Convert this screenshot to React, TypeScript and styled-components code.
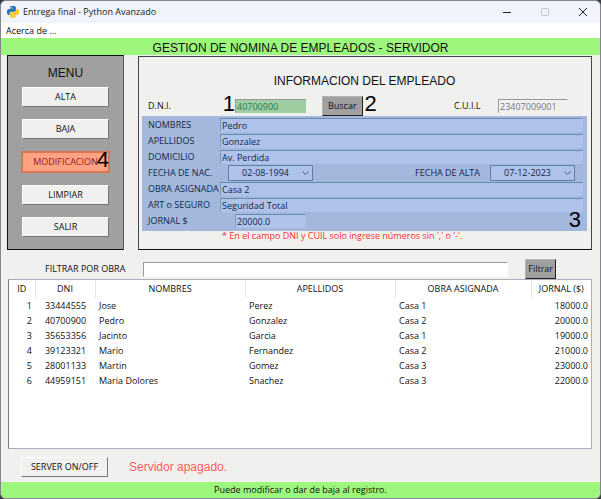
import React, { useState } from "react";
import styled, { createGlobalStyle } from "styled-components";

const GlobalStyle = createGlobalStyle`
  * { box-sizing: border-box; }
  body { margin: 0; background: #3a3c48; }
  body, button, input, select { font-family: "Open Sans", "Noto Sans", sans-serif; font-size: 9px; line-height: 12px; color: #111; }
  h1, h2, p { margin: 0; font-weight: 400; }
`;

const Window = styled.div`
  min-height: 100vh;
  display: flex;
  flex-direction: column;
  background: #f0f0ee;
  border: 1px solid #85858b;
  border-radius: 6px;
  overflow: hidden;
`;

const TitleBar = styled.header`
  display: flex;
  align-items: center;
  gap: 4px;
  height: 22px;
  padding-left: 6px;
  background: #f0f3f9;
`;

const WindowTitle = styled.span`
  flex: 1;
  color: #222;
`;

const CaptionButton = styled.button`
  display: flex;
  align-items: center;
  justify-content: center;
  width: 34px;
  height: 22px;
  padding: 0;
  border: 0;
  background: none;
  color: #222;
  &:disabled { color: #c4c6cb; }
`;

const MenuBar = styled.nav`
  display: flex;
  align-items: center;
  height: 15px;
  padding-left: 5px;
  background: #fff;
`;

const MenuLink = styled.a`
  color: #111;
  font-weight: 500;
  text-decoration: none;
`;

const Banner = styled.h1`
  height: 17px;
  background: #9cf77c;
  font: 12px/20px "Liberation Sans", Arial, sans-serif;
  text-align: center;
`;

const Body = styled.main`
  flex: 1;
  display: flex;
  flex-direction: column;
  padding: 0 8px 0 6px;
`;

const TopArea = styled.div`
  display: grid;
  grid-template-columns: 117px 1fr;
  gap: 14px;
`;

const MenuPanel = styled.aside`
  display: flex;
  flex-direction: column;
  align-items: center;
  gap: 12px;
  padding-top: 9px;
  background: #a0a0a0;
  border: 1px solid #111;
  border-right-color: #555;
`;

const PanelTitle = styled.h2`
  font: 12px/16px "Liberation Sans", Arial, sans-serif;
  text-align: center;
`;

const MenuHeading = styled(PanelTitle)`
  margin-bottom: -6px;
`;

const PushButton = styled.button<{ $marked?: boolean }>`
  width: ${(p) => (p.$marked ? "89px" : "87px")};
  height: ${(p) => (p.$marked ? "22px" : "20px")};
  padding: 0;
  background: ${(p) => (p.$marked ? "#ffa183" : "#f0f0ee")};
  border: ${(p) => (p.$marked ? "2px" : "1px")} solid;
  border-color: ${(p) => (p.$marked ? "#dc7558" : "#fff #777 #777 #fff")};
  color: ${(p) => (p.$marked ? "#8f1c1c" : "#111")};
`;

const MarkAnchor = styled.div`
  position: relative;
  display: flex;
`;

const Mark = styled.span<{ $right: number; $bottom: number }>`
  position: absolute;
  right: ${(p) => p.$right}px;
  bottom: ${(p) => p.$bottom}px;
  font: 22px/22px "Liberation Sans", Arial, sans-serif;
  color: #000;
`;

const InfoPanel = styled.section`
  display: flex;
  flex-direction: column;
  margin-top: 1px;
  padding: 16px 4px 0 3px;
  border: 1px solid #44424c;
  border-bottom: 1px solid #111;
`;

const LookupRow = styled.div`
  display: flex;
  align-items: center;
  height: 20px;
  margin-top: 7px;
  padding: 0 19px 0 6px;
`;

const LookupLabel = styled.label<{ $width: number }>`
  width: ${(p) => p.$width}px;
`;

const Entry = styled.input<{ $width?: number; $tone?: string; $ink?: string }>`
  width: ${(p) => (p.$width ? p.$width + "px" : "100%")};
  min-width: 0;
  height: 14px;
  padding: 0 1px;
  border: 1px solid transparent;
  border-top-color: #999;
  border-left-color: #999;
  background: ${(p) => p.$tone ?? "#fff"};
  color: ${(p) => p.$ink ?? "#222"};
  outline: 0;
`;

const BlueEntry = styled(Entry)`
  background: #aec2ea;
  border-color: #6a8bae transparent transparent #7d9abf;
  color: #14284a;
`;

const GreyButton = styled.button`
  height: 20px;
  padding: 0 5px;
  background: #a0a0a0;
  border: 1px solid #b5b5b5;
  border-right-color: #222;
  border-bottom-color: #222;
`;

const SearchSlot = styled(MarkAnchor)`
  margin-left: 16px;
`;

const Spacer = styled.div`
  flex: 1;
`;

const Fields = styled.div`
  position: relative;
  padding: 1px 4px 2px 6px;
  background: #a3b8dc;
  color: #14284a;
`;

const FieldRow = styled.div`
  display: grid;
  grid-template-columns: 72px 1fr;
  align-items: center;
  height: 16px;
`;

const DateGroup = styled.div`
  display: flex;
  align-items: center;
  padding: 0 8px;
`;

const DateLabel = styled.label`
  margin: 0 10px 0 auto;
`;

const DateBox = styled.div`
  position: relative;
  display: flex;
`;

const DateSelect = styled.select`
  appearance: none;
  width: 85px;
  height: 16px;
  padding: 0 0 0 13px;
  border: 1px solid #5e7ea4;
  border-radius: 1px;
  background: #aec2ea;
  color: #14284a;
`;

const Arrow = styled.svg`
  position: absolute;
  right: 4px;
  top: 5px;
  pointer-events: none;
`;

const SalaryCell = styled.div`
  display: flex;
  padding-left: 15px;
`;

const Hint = styled.p`
  height: 18px;
  padding-left: 80px;
  line-height: 10px;
  color: #f8302c;
`;

const FilterRow = styled.form`
  display: flex;
  align-items: center;
  height: 20px;
  margin-top: 9px;
  padding: 0 36px 0 38px;
`;

const FilterLabel = styled.label`
  width: 98px;
`;

const FilterEntry = styled(Entry)`
  flex: 1;
  height: 15px;
  margin-right: 17px;
`;

const FilterButton = styled(GreyButton)`
  padding: 0 2px;
`;

const TableFrame = styled.div`
  flex: 1;
  margin-left: 1px;
  background: #fff;
  border: 1px solid #aeb0b8;
  border-left-color: #777b88;
`;

const Table = styled.table`
  width: 100%;
  table-layout: fixed;
  border-collapse: collapse;
`;

const Col = styled.col<{ $width: string }>`
  width: ${(p) => p.$width};
`;

const HeadCell = styled.th`
  height: 18px;
  padding: 0;
  border-right: 1px solid #e4e4e4;
  font-weight: 400;
  &:last-child { border-right: 0; }
`;

const Cell = styled.td<{ $align?: string }>`
  height: 15px;
  padding: 0 3px 0 4px;
  text-align: ${(p) => p.$align ?? "left"};
`;

const ServerRow = styled.div`
  display: flex;
  align-items: center;
  gap: 21px;
  height: 33px;
  padding: 2px 0 0 14px;
`;

const ServerState = styled.p`
  font: 12px/16px "Liberation Sans", Arial, sans-serif;
  color: #ff5c5c;
`;

const StatusBar = styled.footer`
  height: 16px;
  background: #9cf77c;
  font-weight: 500;
  line-height: 16px;
  text-align: center;
`;

const SNAKE =
  "M14.25.18l.9.2.73.26.59.3.45.32.34.34.25.34.16.33.1.3.04.26.02.2-.01.13V8.5l-.05.63-.13.55-.21.46-.26.38-.3.31-.33.25-.35.19-.35.14-.33.1-.3.07-.26.04-.21.02H8.77l-.69.05-.59.14-.5.22-.41.27-.33.32-.27.35-.2.36-.15.37-.1.35-.07.32-.04.27-.02.21v3.06H3.17l-.21-.03-.28-.07-.32-.12-.35-.18-.36-.26-.36-.36-.35-.46-.32-.59-.28-.73-.21-.88-.14-1.05-.05-1.23.06-1.22.16-1.04.24-.87.32-.71.36-.57.4-.44.42-.33.42-.24.4-.16.36-.1.32-.05.24-.01h.16l.06.01h8.16v-.83H6.18l-.01-2.75-.02-.37.05-.34.11-.31.17-.28.25-.26.31-.23.38-.2.44-.18.51-.15.58-.12.64-.1.71-.06.77-.04.84-.02 1.27.05zm-6.3 1.98l-.23.33-.08.41.08.41.23.34.33.22.41.09.41-.09.33-.22.23-.34.08-.41-.08-.41-.23-.33-.33-.22-.41-.09-.41.09z";

const PythonLogo = () => (
  <svg width="12" height="12" viewBox="0 0 24 24" aria-hidden="true">
    <path d={SNAKE} fill="#2a74b8" />
    <path d={SNAKE} fill="#fbc928" transform="rotate(180 12 12)" />
  </svg>
);

const DateField = ({ id, value }: { id: string; value: string }) => (
  <DateBox>
    <DateSelect id={id} defaultValue={value}>
      <option>{value}</option>
    </DateSelect>
    <Arrow width="7" height="6" viewBox="0 0 7 6">
      <path d="M.5 1.5l3 3 3-3" fill="none" stroke="#3c5a86" />
    </Arrow>
  </DateBox>
);

const TextRow = ({ id, label, value }: { id: string; label: string; value: string }) => (
  <FieldRow>
    <label htmlFor={id}>{label}</label>
    <BlueEntry id={id} defaultValue={value} />
  </FieldRow>
);

const COLUMNS = [
  { title: "ID", width: "26px", align: "right" },
  { title: "DNI", width: "60px", align: "center" },
  { title: "NOMBRES", width: "150px" },
  { title: "APELLIDOS", width: "auto" },
  { title: "OBRA ASIGNADA", width: "136px" },
  { title: "JORNAL ($)", width: "60px", align: "right" },
];

const EMPLOYEES = [
  ["1", "33444555", "Jose", "Perez", "Casa 1", "18000.0"],
  ["2", "40700900", "Pedro", "Gonzalez", "Casa 2", "20000.0"],
  ["3", "35653356", "Jacinto", "Garcia", "Casa 1", "19000.0"],
  ["4", "39123321", "Mario", "Fernandez", "Casa 2", "21000.0"],
  ["5", "28001133", "Martin", "Gomez", "Casa 3", "23000.0"],
  ["6", "44959151", "Maria Dolores", "Snachez", "Casa 3", "22000.0"],
];

export default function App() {
  const [filter, setFilter] = useState("");
  return (
    <>
      <GlobalStyle />
      <Window>
        <TitleBar>
          <PythonLogo />
          <WindowTitle>Entrega final - Python Avanzado</WindowTitle>
          <CaptionButton aria-label="Minimizar">
            <svg width="8" height="8" viewBox="0 0 8 8"><path d="M0 4.5h8" stroke="currentColor" /></svg>
          </CaptionButton>
          <CaptionButton aria-label="Maximizar" disabled>
            <svg width="8" height="8" viewBox="0 0 8 8"><rect x=".5" y=".5" width="7" height="7" rx="1" fill="none" stroke="currentColor" /></svg>
          </CaptionButton>
          <CaptionButton aria-label="Cerrar">
            <svg width="8" height="8" viewBox="0 0 8 8"><path d="M0 0l8 8M8 0L0 8" stroke="currentColor" /></svg>
          </CaptionButton>
        </TitleBar>
        <MenuBar>
          <MenuLink href="#acerca">Acerca de ...</MenuLink>
        </MenuBar>
        <Banner>GESTION DE NOMINA DE EMPLEADOS - SERVIDOR</Banner>
        <Body>
          <TopArea>
            <MenuPanel>
              <MenuHeading>MENU</MenuHeading>
              <PushButton>ALTA</PushButton>
              <PushButton>BAJA</PushButton>
              <MarkAnchor>
                <PushButton $marked>MODIFICACION</PushButton>
                <Mark $right={1} $bottom={2}>4</Mark>
              </MarkAnchor>
              <PushButton>LIMPIAR</PushButton>
              <PushButton>SALIR</PushButton>
            </MenuPanel>
            <InfoPanel>
              <PanelTitle>INFORMACION DEL EMPLEADO</PanelTitle>
              <LookupRow>
                <LookupLabel htmlFor="dni" $width={87}>D.N.I.</LookupLabel>
                <MarkAnchor>
                  <Entry id="dni" defaultValue="40700900" $width={71} $tone="#a0cca2" $ink="#1d7f58" />
                  <Mark $right={71} $bottom={-2}>1</Mark>
                </MarkAnchor>
                <SearchSlot>
                  <GreyButton type="button">Buscar</GreyButton>
                  <Mark $right={-14} $bottom={1}>2</Mark>
                </SearchSlot>
                <Spacer />
                <LookupLabel htmlFor="cuil" $width={44}>C.U.I.L</LookupLabel>
                <Entry id="cuil" defaultValue="23407009001" readOnly $width={70} $tone="#f0f0ee" $ink="#777" />
              </LookupRow>
              <Fields>
                <TextRow id="nombres" label="NOMBRES" value="Pedro" />
                <TextRow id="apellidos" label="APELLIDOS" value="Gonzalez" />
                <TextRow id="domicilio" label="DOMICILIO" value="Av. Perdida" />
                <FieldRow>
                  <label htmlFor="nacimiento">FECHA DE NAC.</label>
                  <DateGroup>
                    <DateField id="nacimiento" value="02-08-1994" />
                    <DateLabel htmlFor="alta">FECHA DE ALTA</DateLabel>
                    <DateField id="alta" value="07-12-2023" />
                  </DateGroup>
                </FieldRow>
                <TextRow id="obra" label="OBRA ASIGNADA" value="Casa 2" />
                <TextRow id="seguro" label="ART o SEGURO" value="Seguridad Total" />
                <FieldRow>
                  <label htmlFor="jornal">JORNAL $</label>
                  <SalaryCell>
                    <BlueEntry id="jornal" defaultValue="20000.0" $width={71} />
                  </SalaryCell>
                </FieldRow>
                <Mark $right={6} $bottom={0}>3</Mark>
              </Fields>
              <Hint>* En el campo DNI y CUIL solo ingrese números sin ',' o '-'.</Hint>
            </InfoPanel>
          </TopArea>
          <FilterRow onSubmit={(e) => e.preventDefault()}>
            <FilterLabel htmlFor="filtro">FILTRAR POR OBRA</FilterLabel>
            <FilterEntry id="filtro" value={filter} onChange={(e) => setFilter(e.target.value)} />
            <FilterButton type="submit">Filtrar</FilterButton>
          </FilterRow>
          <TableFrame>
            <Table>
              <colgroup>
                {COLUMNS.map((c) => <Col key={c.title} $width={c.width} />)}
              </colgroup>
              <thead>
                <tr>{COLUMNS.map((c) => <HeadCell key={c.title} scope="col">{c.title}</HeadCell>)}</tr>
              </thead>
              <tbody>
                {EMPLOYEES.map((row) => (
                  <tr key={row[0]}>
                    {row.map((text, i) => <Cell key={i} $align={COLUMNS[i].align}>{text}</Cell>)}
                  </tr>
                ))}
              </tbody>
            </Table>
          </TableFrame>
          <ServerRow>
            <PushButton>SERVER ON/OFF</PushButton>
            <ServerState>Servidor apagado.</ServerState>
          </ServerRow>
        </Body>
        <StatusBar>Puede modificar o dar de baja al registro.</StatusBar>
      </Window>
    </>
  );
}
